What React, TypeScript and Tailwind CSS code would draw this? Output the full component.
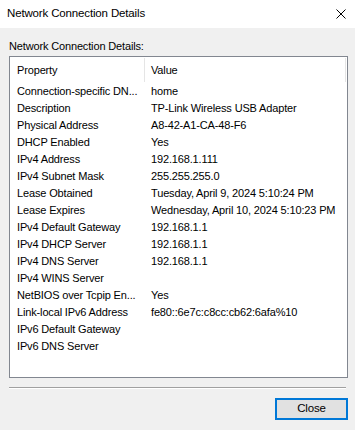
import React from "react";

const rows: [string, string][] = [
  ["Connection-specific DN...", "home"],
  ["Description", "TP-Link Wireless USB Adapter"],
  ["Physical Address", "A8-42-A1-CA-48-F6"],
  ["DHCP Enabled", "Yes"],
  ["IPv4 Address", "192.168.1.111"],
  ["IPv4 Subnet Mask", "255.255.255.0"],
  ["Lease Obtained", "Tuesday, April 9, 2024 5:10:24 PM"],
  ["Lease Expires", "Wednesday, April 10, 2024 5:10:23 PM"],
  ["IPv4 Default Gateway", "192.168.1.1"],
  ["IPv4 DHCP Server", "192.168.1.1"],
  ["IPv4 DNS Server", "192.168.1.1"],
  ["IPv4 WINS Server", ""],
  ["NetBIOS over Tcpip En...", "Yes"],
  ["Link-local IPv6 Address", "fe80::6e7c:c8cc:cb62:6afa%10"],
  ["IPv6 Default Gateway", ""],
  ["IPv6 DNS Server", ""],
];

export default function App() {
  return (
    <div
      className="w-[355px] h-[430px] bg-[#f0f0f0] flex flex-col text-black text-[11px] tracking-[-0.15px] overflow-hidden"
      style={{ fontFamily: '"Liberation Sans", Arial, sans-serif' }}
    >
      <div className="h-[28px] bg-white flex items-center justify-between pl-[7px] pr-[8px] shrink-0">
        <span className="text-[11.5px]">Network Connection Details</span>
        <svg width="10" height="10" viewBox="0 0 10 10" className="mr-[1px]">
          <path d="M0.5 0.5 L9.5 9.5 M9.5 0.5 L0.5 9.5" stroke="#000" strokeWidth="1" />
        </svg>
      </div>
      <div className="flex flex-col pl-[9px]">
        <div className="h-[28px] flex items-end pb-[3px] leading-[14px]">Network Connection Details:</div>
        <div className="w-[339px] h-[322px] border border-[#828790] bg-white flex flex-col">
          <div className="h-[26px] flex items-stretch shrink-0">
            <div className="w-[135px] flex items-center pl-[7px] pt-[1px] border-r border-[#e5e5e5] my-[1px]">Property</div>
            <div className="flex-1 flex items-center pl-[6px] pt-[1px] border-r border-[#e5e5e5] mr-[1px] my-[1px]">Value</div>
          </div>
          {rows.map(([k, v]) => (
            <div key={k} className="h-[17px] flex items-center leading-[17px] whitespace-nowrap">
              <div className="w-[135px] pl-[7px]">{k}</div>
              <div className="pl-[6px]">{v}</div>
            </div>
          ))}
        </div>
        <div className="w-[337px] mt-[9px] border-t border-[#a0a0a0] border-b border-b-white"></div>
        <div className="w-[339px] flex justify-end mt-[9px]">
          <button className="w-[73px] h-[22px] bg-[#e1e1e1] border-2 border-[#0078d7] flex items-center justify-center text-[11.5px] leading-none">
            Close
          </button>
        </div>
      </div>
    </div>
  );
}
